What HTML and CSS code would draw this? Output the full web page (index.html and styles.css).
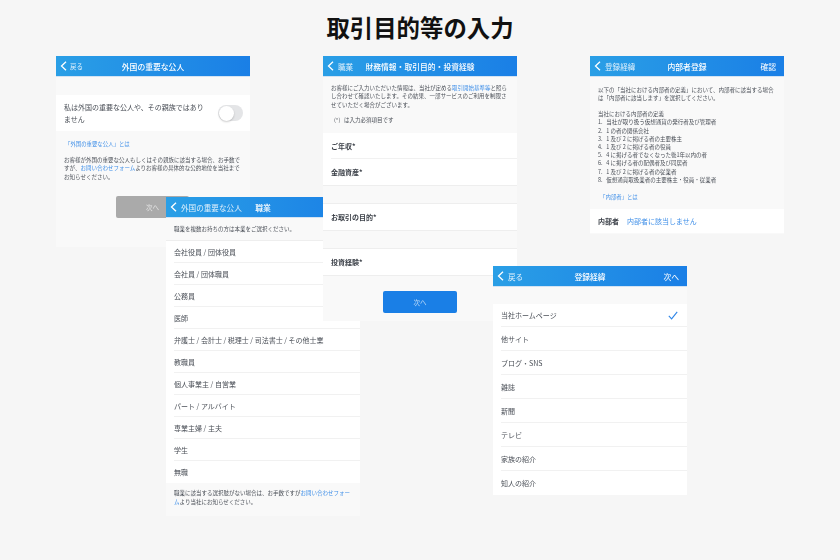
FILE: index.html
```html
<!DOCTYPE html>
<html lang="ja">
    <head>
        <meta charset="utf-8">
        <title>取引目的等の入力</title>
        <link rel="stylesheet" href="styles.css">
    </head>
    <body>
        <h1 class="page-title">取引目的等の入力</h1>

        <section class="screen screen-pep">
            <header class="nav">
                <span class="nav-back"><svg class="chevron" viewBox="0 0 7 10"><path d="M6 .7 1.5 5 6 9.3"/></svg><span class="nav-back-label">戻る</span></span>
                <span class="nav-title">外国の重要な公人</span>
                <span class="nav-action"></span>
            </header>
            <div class="band band-18"></div>
            <div class="toggle-row">
                <p>私は外国の重要な公人や、その親族ではありません</p>
                <span class="toggle"><span class="toggle-knob"></span></span>
            </div>
            <p class="help-link help-link-pep"><a>「外国の重要な公人」とは</a></p>
            <p class="note note-pep">お客様が外国の重要な公人もしくはその親族に該当する場合、お手数ですが、<a>お問い合わせフォーム</a>よりお客様の具体的な公的地位を当社までお知らせください。</p>
            <button type="button" class="btn btn-off">次へ</button>
        </section>

        <section class="screen screen-job">
            <header class="nav">
                <span class="nav-back"><svg class="chevron" viewBox="0 0 7 10"><path d="M6 .7 1.5 5 6 9.3"/></svg><span class="nav-back-label nav-back-large">外国の重要な公人</span></span>
                <span class="nav-title">職業</span>
                <span class="nav-action"></span>
            </header>
            <p class="note note-job">職業を複数お持ちの方は本業をご選択ください。</p>
            <ul class="list list-job">
                <li>会社役員 / 団体役員</li>
                <li>会社員 / 団体職員</li>
                <li>公務員</li>
                <li>医師</li>
                <li>弁護士 / 会計士 / 税理士 / 司法書士 / その他士業</li>
                <li>教職員</li>
                <li>個人事業主 / 自営業</li>
                <li>パート / アルバイト</li>
                <li>専業主婦 / 主夫</li>
                <li>学生</li>
                <li>無職</li>
            </ul>
            <p class="note note-job-foot">職業に該当する選択肢がない場合は、お手数ですが<a>お問い合わせフォーム</a>より当社にお知らせください。</p>
        </section>

        <section class="screen screen-finance">
            <header class="nav">
                <span class="nav-back"><svg class="chevron" viewBox="0 0 7 10"><path d="M6 .7 1.5 5 6 9.3"/></svg><span class="nav-back-label nav-back-large">職業</span></span>
                <span class="nav-title">財務情報・取引目的・投資経験</span>
                <span class="nav-action"></span>
            </header>
            <p class="note note-finance">お客様にご入力いただいた情報は、当社が定める<a>取引開始基準等</a>と照らし合わせて確認いたします。その結果、一部サービスのご利用を制限させていただく場合がございます。</p>
            <p class="note note-required">(*)&nbsp;&nbsp;&nbsp;は入力必須項目です</p>
            <div class="field-group">
                <div class="field field-line">ご年収*</div>
                <div class="field">金融資産*</div>
            </div>
            <div class="field-group field-single">
                <div class="field">お取引の目的*</div>
            </div>
            <div class="field-group field-single">
                <div class="field">投資経験*</div>
            </div>
            <button type="button" class="btn btn-on">次へ</button>
        </section>

        <section class="screen screen-insider">
            <header class="nav">
                <span class="nav-back"><svg class="chevron" viewBox="0 0 7 10"><path d="M6 .7 1.5 5 6 9.3"/></svg><span class="nav-back-label nav-back-large">登録経緯</span></span>
                <span class="nav-title">内部者登録</span>
                <span class="nav-action">確認</span>
            </header>
            <p class="note note-insider">以下の「当社における内部者の定義」において、内部者に該当する場合は「内部者に該当します」を選択してください。</p>
            <ul class="defs">
                <li>当社における内部者の定義</li>
                <li>1.&nbsp;&nbsp;&nbsp;当社が取り扱う仮想通貨の発行者及び管理者</li>
                <li>2.&nbsp;&nbsp;&nbsp;1 の者の関係会社</li>
                <li>3.&nbsp;&nbsp;&nbsp;1 及び 2 に掲げる者の主要株主</li>
                <li>4.&nbsp;&nbsp;&nbsp;1 及び 2 に掲げる者の役員</li>
                <li>5.&nbsp;&nbsp;&nbsp;4 に掲げる者でなくなった後1年以内の者</li>
                <li>6.&nbsp;&nbsp;&nbsp;4 に掲げる者の配偶者及び同居者</li>
                <li>7.&nbsp;&nbsp;&nbsp;1 及び 2 に掲げる者の従業者</li>
                <li>8.&nbsp;&nbsp;&nbsp;仮想通貨取扱業者の主要株主・役員・従業者</li>
            </ul>
            <p class="help-link help-link-insider"><a>「内部者」とは</a></p>
            <div class="insider-row"><strong>内部者</strong><a>内部者に該当しません</a></div>
        </section>

        <section class="screen screen-source">
            <header class="nav">
                <span class="nav-back"><svg class="chevron" viewBox="0 0 7 10"><path d="M6 .7 1.5 5 6 9.3"/></svg><span class="nav-back-label nav-back-large">戻る</span></span>
                <span class="nav-title">登録経緯</span>
                <span class="nav-action">次へ</span>
            </header>
            <div class="band band-17"></div>
            <ul class="list list-source">
                <li>当社ホームページ<svg class="check" viewBox="0 0 10 9"><path d="M.8 4.8 3.6 7.8 9.2.8"/></svg></li>
                <li>他サイト</li>
                <li>ブログ・SNS</li>
                <li>雑誌</li>
                <li>新聞</li>
                <li>テレビ</li>
                <li>家族の紹介</li>
                <li>知人の紹介</li>
            </ul>
        </section>
    </body>
</html>
```

FILE: styles.css
```css
body {
    margin: 0;
    width: 840px;
    height: 560px;
    position: relative;
    overflow: hidden;
    background: #f6f6f6;
    color: #4a4f57;
    font-family: "Noto Sans CJK JP", "Noto Sans", sans-serif;
}

p, ul {
    margin: 0;
    padding: 0;
}

ul {
    list-style: none;
}

a {
    color: #3f8fe8;
}

.page-title {
    margin: 0;
    padding-top: 10px;
    text-align: center;
    font-size: 23.4px;
    line-height: 34px;
    font-weight: 700;
    color: #111;
}

/* the phone screens sit on a free canvas and overlap */
.screen {
    position: absolute;
    width: 194px;
    background: #f9f9f9;
    filter: blur(.3px);
}

.screen-pep {
    left: 56px;
    top: 56px;
    height: 191px;
}

.screen-job {
    left: 166px;
    top: 197px;
    height: 319px;
}

.screen-finance {
    left: 323px;
    top: 56px;
    height: 265px;
}

.screen-insider {
    left: 590px;
    top: 56px;
    height: 178px;
}

.screen-source {
    left: 493px;
    top: 266px;
    height: 229px;
}

.nav {
    display: grid;
    grid-template-columns: minmax(0, 1fr) auto minmax(0, 1fr);
    align-items: center;
    height: 20px;
    padding: 0 8px;
    border-bottom: 1px solid #d3e3f3;
    background: linear-gradient(90deg, #2a9fe6, #1a7fe6);
    color: #fff;
    font-size: 7.8px;
    white-space: nowrap;
}

.nav-back {
    display: flex;
    align-items: center;
    gap: 3px;
}

.chevron {
    width: 7px;
    height: 10px;
    margin-left: -4px;
    fill: none;
    stroke: #fff;
    stroke-width: 1.3;
}

.nav-back-label {
    font-size: 6.5px;
    opacity: .85;
}

.nav-back-large {
    font-size: 7.6px;
    padding-left: 1px;
}

.nav-title {
    font-weight: 500;
}

.nav-action {
    text-align: right;
}

.band-18 {
    height: 18px;
}

.band-17 {
    height: 17px;
}

.toggle-row {
    display: flex;
    align-items: center;
    justify-content: space-between;
    height: 36px;
    padding: 0 7px 0 8px;
    background: #fff;
    font-size: 7px;
    line-height: 12px;
}

.toggle-row p {
    width: 146px;
}

.toggle {
    width: 25px;
    height: 16px;
    border-radius: 8px;
    background: #e4e5e7;
}

.toggle-knob {
    display: block;
    width: 15px;
    height: 15px;
    margin: .5px;
    border-radius: 50%;
    background: #fff;
    box-shadow: 0 1px 2px rgba(0, 0, 0, .2);
}

.note {
    font-size: 5.5px;
    line-height: 8.3px;
    padding: 0 8px;
}

.help-link {
    font-size: 5.4px;
    line-height: 8px;
}

.help-link-pep {
    padding: 9px 0 0 9px;
}

.note-pep {
    padding-top: 8px;
}

.btn {
    display: block;
    width: 73px;
    height: 22px;
    padding: 0;
    border: 0;
    border-radius: 2px;
    color: rgba(255, 255, 255, .7);
    font: inherit;
    font-size: 6.5px;
}

.btn-off {
    margin: 15px 0 0 60px;
    background: #aaa;
}

.btn-on {
    margin: 15px 0 0 60px;
    width: 74px;
    background: #1a7fe6;
}

.note-job {
    height: 22px;
    line-height: 22px;
    border-bottom: 1px solid #eee;
}

.list {
    background: #fff;
    font-size: 7px;
}

.list li {
    display: flex;
    align-items: center;
    justify-content: space-between;
    margin-left: 8px;
    border-bottom: 1px solid #f1f1f1;
    box-sizing: border-box;
}

.list-job li {
    height: 22px;
}

.list-source li {
    height: 24px;
    padding-right: 9px;
}

.list-source li:first-child {
    height: 23px;
}

.list li:last-child {
    border-bottom: 0;
}

.check {
    width: 10px;
    height: 9px;
    fill: none;
    stroke: #2f86e8;
    stroke-width: 1.1;
}

.note-job-foot {
    padding-top: 6px;
    line-height: 9px;
}

.note-finance {
    padding-top: 7px;
}

.note-required {
    padding: 7px 0 0 11px;
}

.field-group {
    margin-top: 9px;
    background: #fff;
    border-bottom: 1px solid #eee;
    font-size: 7px;
    font-weight: 700;
    color: #3a3f47;
}

.field {
    display: flex;
    align-items: center;
    height: 26px;
    margin-left: 8px;
}

.field-line {
    height: 25px;
    border-bottom: 1px solid #f1f1f1;
}

.field-single {
    margin-top: 17px;
    border-top: 1px solid #eee;
}

.note-insider {
    padding-top: 9px;
}

.defs {
    padding: 7.5px 8px 0;
    font-size: 5.5px;
    line-height: 8.2px;
}

.help-link-insider {
    padding: 9px 0 0 10px;
}

.insider-row {
    display: flex;
    align-items: center;
    gap: 8px;
    height: 24px;
    margin-top: 8px;
    padding-left: 8px;
    background: #fff;
    font-size: 7px;
}

.insider-row strong {
    color: #3a3f47;
}
```
